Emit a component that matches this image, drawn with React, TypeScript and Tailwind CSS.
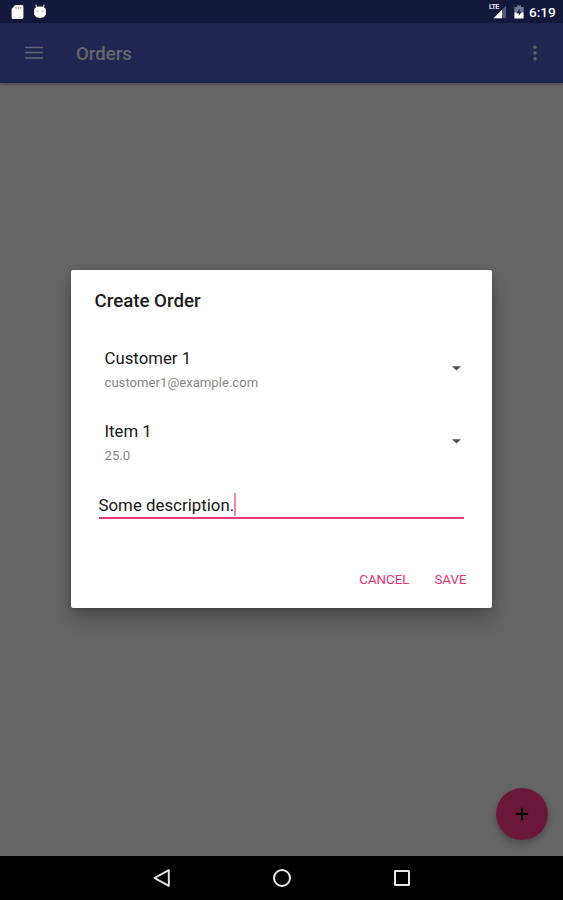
import { useState } from "react";

interface SpinnerRowProps {
  title: string;
  subtitle: string;
}

const StatusBar = () => (
  <div className="flex h-[23px] shrink-0 items-center bg-[#14183d] pl-[10px] pr-[7px]">
    <svg width="14" height="16" viewBox="0 0 14 16" className="shrink-0">
      <path fill="#fff" d="M5.2 1H12a1.4 1.4 0 0 1 1.4 1.4v11.2A1.4 1.4 0 0 1 12 15H3a1.4 1.4 0 0 1-1.4-1.4V5z" />
      <path stroke="#a5a7b8" strokeWidth="1.2" d="M6.2 3v2M8.5 3v2M10.8 3v2" />
    </svg>
    <svg width="14" height="16" viewBox="0 0 14 16" className="ml-[9px] shrink-0">
      <path stroke="#d4d5de" strokeWidth="1.2" d="m2.6.8 1.6 2.6M11.4.8 9.8 3.4" />
      <path fill="#fff" d="M1 5.5C2 3.5 4.2 2.6 7 2.6s5 .9 6 2.9v3.3c0 3.2-2.4 5.2-6 5.2s-6-2-6-5.2z" />
      <path fill="#8d90a5" d="M3.8 6.6H5v1.1H3.8zM9 6.6h1.2v1.1H9z" />
    </svg>
    <div className="flex-1" />
    <div className="relative h-4 w-[18px] shrink-0">
      <svg width="18" height="16" viewBox="0 0 18 16">
        <path fill="#54577a" d="M17 1.8V14.3H4.5z" />
        <path fill="#fff" d="M13 5.8v8.5H4.5z" />
        <path fill="#14183d" d="M0 0h10.5v7.6H0z" />
      </svg>
      <span className="absolute left-0 top-[0.5px] text-[7px] font-bold leading-[7px] tracking-[-0.5px] text-[#e4e5ec]">
        LTE
      </span>
    </div>
    <svg width="12" height="16" viewBox="0 0 12 16" className="ml-[6px] shrink-0">
      <path fill="#73768f" d="M4 1.5h4v1.5h2.6v6H1.4V3H4z" />
      <path fill="#fff" d="M1.4 8.5h9.2v6H1.4z" />
      <path fill="#14183d" d="M6.7 4.8 3.5 9.3h2.2v2.500l3-4H6.7z" />
    </svg>
    <span className="ml-[4px] mt-[2px] w-[27px] text-[13.5px] font-medium leading-none text-white">6:19</span>
  </div>
);

const Toolbar = () => (
  <header className="flex h-[60px] shrink-0 items-center bg-[#202651] pl-[25px] pr-[25px] text-[#66676b] shadow-[0_1px_3px_rgba(0,0,0,0.35)]">
    <button aria-label="Open menu">
      <svg width="18" height="14" viewBox="0 0 18 14">
        <path stroke="currentColor" strokeWidth="1.7" d="M0 1.5h18M0 6.5h18M0 12h18" />
      </svg>
    </button>
    <h1 className="ml-[33px] mt-[2px] text-[18.6px] font-medium leading-none">Orders</h1>
    <button aria-label="More options" className="ml-auto">
      <svg width="6" height="16" viewBox="0 0 6 16" fill="currentColor">
        <circle cx="3" cy="2.3" r="1.7" />
        <circle cx="3" cy="8" r="1.7" />
        <circle cx="3" cy="13.7" r="1.7" />
      </svg>
    </button>
  </header>
);

const SpinnerRow = ({ title, subtitle }: SpinnerRowProps) => (
  <button className="flex h-[73.5px] w-full items-start justify-between pl-[10px] pr-[7px] text-left">
    <span className="flex flex-col">
      <span className="text-[16.8px] leading-[24px] text-[#161616]">{title}</span>
      <span className="text-[13.15px] leading-[25px] text-[#858585]">{subtitle}</span>
    </span>
    <svg width="9" height="5" viewBox="0 0 9 5" className="mt-[20px]">
      <path fill="#4c4c4c" d="M0 .2h9L4.5 4.6z" />
    </svg>
  </button>
);

const CreateOrderDialog = () => {
  const [description, setDescription] = useState("Some description.");

  return (
    <section
      role="dialog"
      className="flex h-[338px] w-[421px] flex-col rounded-[2px] bg-white pl-[23.5px] pr-[24px] shadow-[0_12px_18px_rgba(0,0,0,0.22),0_1px_6px_rgba(0,0,0,0.22)]"
    >
      <h2 className="mt-[19px] text-[18.7px] font-medium leading-[24px] text-[#1c1c1c]">Create Order</h2>
      <div className="mt-[32.5px]">
        <SpinnerRow title="Customer 1" subtitle="customer1@example.com" />
        <SpinnerRow title="Item 1" subtitle="25.0" />
      </div>
      <div className="ml-[4px] mr-[4px] flex h-[26.5px] items-start border-b-2 border-[#e23d77]">
        <span
          contentEditable
          suppressContentEditableWarning
          onBlur={(event) => setDescription(event.currentTarget.textContent ?? "")}
          className="text-[16.85px] leading-[24px] text-[#161616] outline-none"
        >
          {description}
        </span>
        <span className="h-[23px] w-[2px] bg-[#f388ab]" />
      </div>
      <div className="mt-[49px] flex justify-end gap-[25px] pr-[1.5px] text-[13.3px] leading-[24px] text-[#ec2f6f]">
        <button>CANCEL</button>
        <button>SAVE</button>
      </div>
    </section>
  );
};

const NavigationBar = () => (
  <nav className="flex h-[44px] shrink-0 items-center justify-center gap-[100px] bg-black">
    <svg width="20" height="20" viewBox="0 0 20 20" fill="none" stroke="#e8e8e8" strokeWidth="1.9">
      <path strokeLinejoin="round" d="M16.8 2.2v15.6L2.5 10z" />
    </svg>
    <svg width="20" height="20" viewBox="0 0 20 20" fill="none" stroke="#e8e8e8" strokeWidth="2">
      <circle cx="10" cy="10" r="8" />
    </svg>
    <svg width="20" height="20" viewBox="0 0 20 20" fill="none" stroke="#e8e8e8" strokeWidth="2">
      <rect x="3" y="3" width="14" height="14" rx=".5" />
    </svg>
  </nav>
);

const App = () => (
  <div className="flex h-[900px] w-[563px] flex-col overflow-hidden bg-[#656565] font-['Roboto',sans-serif]">
    <StatusBar />
    <Toolbar />
    <main className="relative flex flex-1 flex-col items-center pt-[187px]">
      <CreateOrderDialog />
      <button
        aria-label="Add order"
        className="absolute bottom-[16px] right-[15px] flex size-[52px] items-center justify-center rounded-full bg-[#6b1838] shadow-[0_4px_7px_rgba(0,0,0,0.25)]"
      >
        <svg width="14" height="14" viewBox="0 0 14 14">
          <path stroke="#000" strokeWidth="2" d="M7 .8v12.4M.8 7h12.4" />
        </svg>
      </button>
    </main>
    <NavigationBar />
  </div>
);

export default App;
